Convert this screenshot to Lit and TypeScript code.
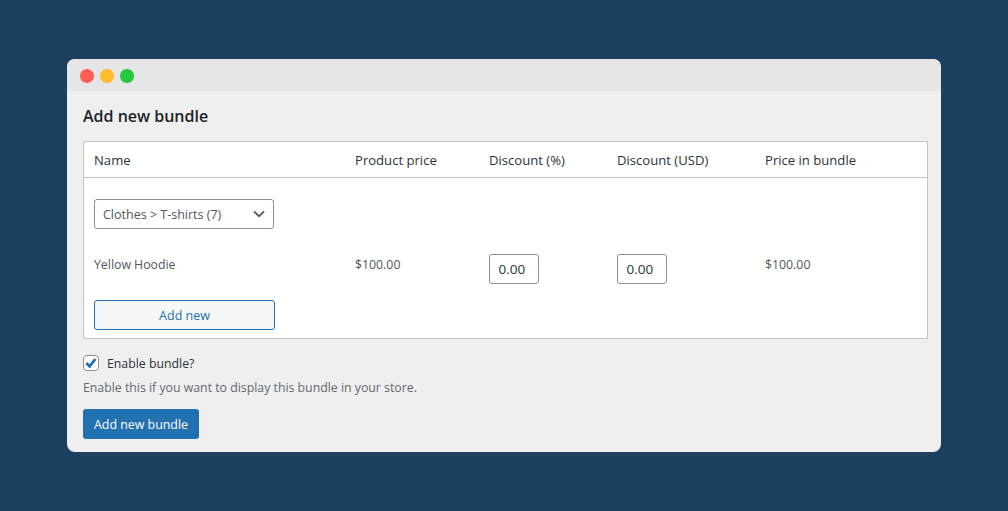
import { LitElement, html, css } from "lit";
import { customElement } from "lit/decorators.js";

@customElement("app-root")
export class AppRoot extends LitElement {
  static styles = css`
    :host { display: block; width: 1008px; height: 511px; background: #1d4060; padding: 59px 67px; box-sizing: border-box;
      font-family: "Open Sans", "Noto Sans", sans-serif; font-size: 12.3px; color: #50575e; overflow: hidden; }
    * { box-sizing: border-box; }
    .window { width: 874px; height: 393px; background: #efefef; border-radius: 8px; overflow: hidden; }
    .titlebar { height: 32px; background: #e6e6e6; display: flex; align-items: center; gap: 6.6px; padding: 2px 0 0 13.4px; }
    .dot { width: 13.4px; height: 13.4px; border-radius: 50%; }
    .red { background: #ff5f57; } .yellow { background: #febc2e; } .green { background: #28c840; }
    .content { padding: 0 13px 0 16px; }
    h2 { margin: 0; height: 50px; display: flex; align-items: center; font-size: 16px; font-weight: 600; color: #1d2327; }
    .panel { height: 198px; background: #fff; border: 1px solid #c3c4c7; }
    .row { display: grid; grid-template-columns: 261px 134px 128px 148px 1fr; padding-left: 10px; }
    .head { height: 36px; align-items: center; padding-top: 1px; border-bottom: 1px solid #c3c4c7; color: #2c3338; font-size: 13.1px; }
    .select-wrap { padding: 21px 0 0 10px; }
    .select { width: 180px; height: 30px; border: 1px solid #8c8f94; border-radius: 3px; display: flex; align-items: center;
      justify-content: space-between; padding: 0 8px 0 8px; color: #50575e; font-size: 12.5px; }
    .item { height: 71px; padding-top: 26px; }
    .item span { line-height: 20px; }
    .input { width: 50px; height: 30px; margin-top: -1px; border: 1px solid #8c8f94; border-radius: 3px; display: flex; align-items: center;
      padding-left: 8.5px; font-size: 13.5px; color: #2c3338; }
    .add { margin-left: 10px; width: 181px; height: 30px; border: 1px solid #2271b1; border-radius: 3px; background: #f6f7f7;
      color: #2271b1; display: flex; align-items: center; justify-content: center; font-size: 12.5px; }
    .check { display: flex; align-items: center; gap: 8px; margin-top: 16px; height: 16px; color: #2c3338; font-size: 12.3px; }
    .box { width: 16px; height: 16px; border: 1px solid #8c8f94; border-radius: 4px; background: #fff; display: flex; }
    .desc { margin-top: 9px; line-height: 16px; font-size: 12.3px; color: #646970; }
    .submit { margin-top: 13px; width: 116px; height: 30px; background: #2271b1; color: #fff; border-radius: 3px; display: flex;
      align-items: center; justify-content: center; font-size: 12.4px; font-weight: 500; }
  `;

  render() {
    return html`
      <div class="window">
        <div class="titlebar">
          <span class="dot red"></span><span class="dot yellow"></span><span class="dot green"></span>
        </div>
        <div class="content">
          <h2>Add new bundle</h2>
          <div class="panel">
            <div class="row head">
              <span>Name</span><span>Product price</span><span>Discount (%)</span><span>Discount (USD)</span><span>Price in bundle</span>
            </div>
            <div class="select-wrap">
              <div class="select">
                <span>Clothes &gt; T-shirts (7)</span>
                <svg width="12" height="8" viewBox="0 0 12 8"><path d="M1 1.4 6 6.2 11 1.4" fill="none" stroke="#50575e" stroke-width="1.8"/></svg>
              </div>
            </div>
            <div class="row item">
              <span>Yellow Hoodie</span><span>$100.00</span>
              <div class="input">0.00</div><div class="input">0.00</div>
              <span>$100.00</span>
            </div>
            <div class="add">Add new</div>
          </div>
          <div class="check">
            <span class="box"><svg width="14" height="14" viewBox="0 0 14 14"><path d="M2.4 7 5.6 10.4 11.4 3" fill="none" stroke="#2271b1" stroke-width="2.8"/></svg></span>
            Enable bundle?
          </div>
          <div class="desc">Enable this if you want to display this bundle in your store.</div>
          <div class="submit">Add new bundle</div>
        </div>
      </div>
    `;
  }
}
